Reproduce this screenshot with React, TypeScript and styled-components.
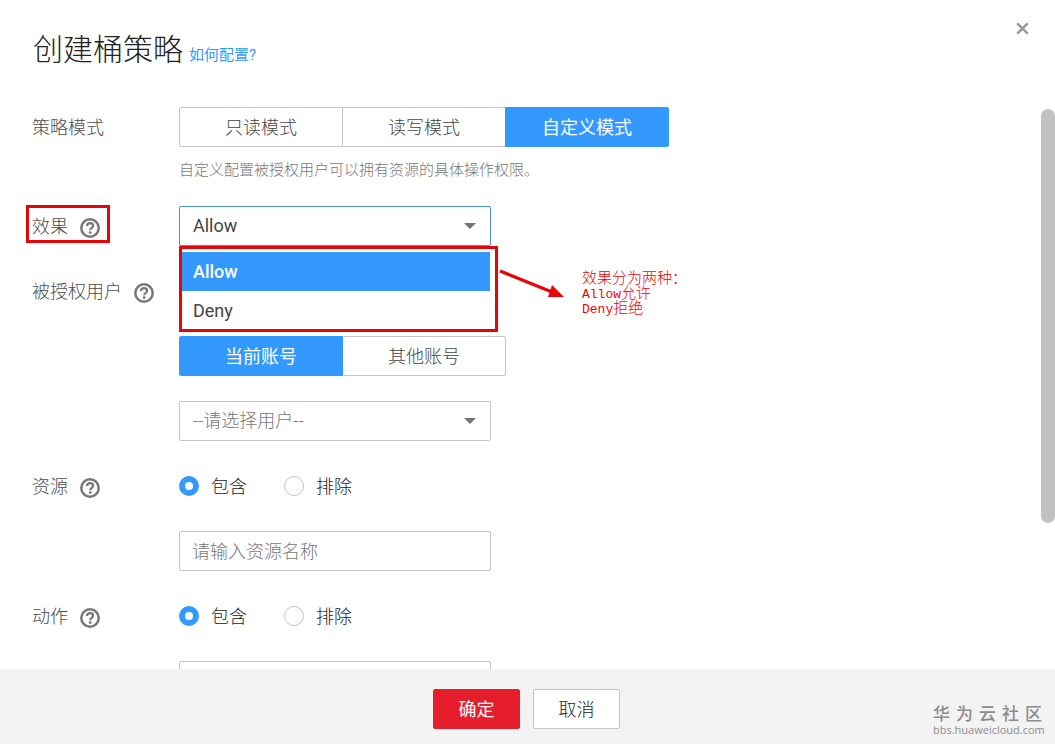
import React from 'react';
import styled, { createGlobalStyle, css } from 'styled-components';

const BLUE = '#3399ff';
const RED = '#e80508';
const BORDER = '#c4c4c4';

const GlobalStyle = createGlobalStyle`
  *, *::before, *::after { box-sizing: border-box; }
  body {
    margin: 0;
    background: #fff;
    color: #222;
    font-family: Roboto, "Noto Sans CJK SC", sans-serif;
    font-size: 18px;
    font-weight: 300;
  }
  button, input, select { font: inherit; color: inherit; margin: 0; }
`;

const Dialog = styled.section`
  display: flex;
  flex-direction: column;
  height: 100vh;
  background: #fff;
`;

const Header = styled.header`
  display: flex;
  flex: none;
  align-items: flex-start;
  justify-content: space-between;
  height: 107px;
  padding: 20px 26px 0 33px;
`;

const Heading = styled.div`
  display: flex;
  align-items: baseline;
  gap: 6px;
  padding-top: 8px;
`;

const Title = styled.h1`
  margin: 0;
  font-size: 30px;
  line-height: 44px;
  font-weight: 300;
`;

const HelpLink = styled.a`
  color: ${BLUE};
  font-size: 15px;
  font-weight: 400;
  text-decoration: none;
`;

const CloseButton = styled.button`
  display: flex;
  padding: 2px 0;
  border: 0;
  background: none;
  color: #999;
  cursor: pointer;
`;

const Body = styled.div`
  display: flex;
  flex: 1;
  min-height: 0;
`;

const Form = styled.form`
  display: flex;
  flex: 1;
  flex-direction: column;
  gap: 25px;
  padding-left: 32px;
  overflow-y: auto;
  scrollbar-width: none;
`;

const Track = styled.div`
  flex: none;
  width: 14px;
  padding-top: 2px;
`;

const Thumb = styled.div`
  height: 74%;
  border-radius: 7px;
  background: #c1c1c1;
`;

const Field = styled.div`
  display: grid;
  grid-template-columns: 147px 1fr;
  flex: none;
`;

const LabelCell = styled.div`
  position: relative;
  display: flex;
  align-items: center;
  gap: 12px;
  height: 40px;
  padding-bottom: 2px;
  color: #4c4c4c;
`;

const HelpButton = styled.button`
  display: flex;
  margin-top: 6px;
  padding: 0;
  border: 0;
  background: none;
  color: #777;
  cursor: pointer;
`;

const LabelMark = styled.div`
  position: absolute;
  top: -1px;
  left: -6px;
  width: 84px;
  height: 38px;
  border: 3px solid ${RED};
  pointer-events: none;
`;

const Controls = styled.div<{ $skipRow?: boolean }>`
  display: flex;
  flex-direction: column;
  align-items: flex-start;
  gap: 25px;
  padding-top: ${p => (p.$skipRow ? '65px' : '0')};
`;

const Hint = styled.p`
  margin: 12px 0 0;
  color: #777;
  font-size: 15px;
  line-height: 22px;
`;

const Segments = styled.div`
  display: flex;
`;

const Segment = styled.button<{ $active?: boolean }>`
  width: 164px;
  height: 40px;
  padding: 0 0 2px;
  border: 1px solid ${BORDER};
  background: #fff;
  color: #444;
  cursor: pointer;
  & + & { margin-left: -1px; }
  &:first-child { border-radius: 2px 0 0 2px; }
  &:last-child { border-radius: 0 2px 2px 0; }
  ${p => p.$active && css`
    position: relative;
    border-color: ${BLUE};
    background: ${BLUE};
    color: #fff;
    font-weight: 400;
  `}
`;

const SelectWrap = styled.div`
  position: relative;
  width: 312px;
`;

const SelectBox = styled.select<{ $open?: boolean; $empty?: boolean }>`
  display: block;
  width: 100%;
  height: 40px;
  padding: 0 13px 2px;
  border: 1px solid ${p => (p.$open ? '#4a90d9' : BORDER)};
  border-radius: 2px;
  outline: 0;
  appearance: none;
  background: #fff;
  color: ${p => (p.$empty ? '#777' : '#444')};
  font-weight: ${p => (p.$empty ? 300 : 400)};
`;

const Caret = styled.svg`
  position: absolute;
  top: 17px;
  right: 15px;
  pointer-events: none;
`;

const Menu = styled.div`
  position: absolute;
  z-index: 2;
  top: 100%;
  left: 0;
  width: 319px;
  height: 86px;
  padding: 3px 5px 0 0;
  border: 3px solid ${RED};
  background: #fff;
`;

const Option = styled.button<{ $active?: boolean }>`
  display: block;
  width: 100%;
  height: 39px;
  padding: 0 11px;
  border: 0;
  background: ${p => (p.$active ? BLUE : 'transparent')};
  color: ${p => (p.$active ? '#fff' : '#444')};
  font-weight: ${p => (p.$active ? 500 : 400)};
  text-align: left;
`;

const NoteArrow = styled.svg`
  position: absolute;
  top: 62px;
  left: 319px;
`;

const Note = styled.div`
  position: absolute;
  top: 66px;
  left: 403px;
  color: ${RED};
  font-family: "Liberation Mono", "Noto Sans CJK SC", monospace;
  font-size: 15px;
  white-space: nowrap;
`;

const NoteLine = styled.p`
  height: 15px;
  margin: 0;
  line-height: 15px;
`;

const Mono = styled.span`
  font-size: 13px;
  line-height: 13px;
`;

const RadioRow = styled.div`
  display: flex;
  gap: 37px;
  height: 40px;
`;

const RadioLabel = styled.label`
  display: flex;
  align-items: center;
  gap: 12px;
`;

const RadioText = styled.span`
  padding-bottom: 2px;
`;

const Radio = styled.input`
  width: 20px;
  height: 20px;
  border: 1px solid ${BORDER};
  border-radius: 50%;
  appearance: none;
  background: #fff;
  &:checked { border: 6px solid ${BLUE}; }
`;

const TextInput = styled.input`
  width: 312px;
  height: 40px;
  padding: 0 12px;
  border: 1px solid ${BORDER};
  border-radius: 2px;
  outline: 0;
  background: #fff;
  &::placeholder { color: #777; opacity: 1; }
`;

const Footer = styled.footer`
  position: relative;
  display: flex;
  flex: none;
  align-items: center;
  justify-content: center;
  gap: 13px;
  height: 75px;
  padding: 4px 2px 0 0;
  background: #f3f3f3;
`;

const ActionButton = styled.button<{ $primary?: boolean }>`
  width: 87px;
  height: 40px;
  padding: 0 0 2px;
  border: 1px solid ${p => (p.$primary ? '#e61e2b' : BORDER)};
  border-radius: 2px;
  background: ${p => (p.$primary ? '#e61e2b' : '#fff')};
  color: ${p => (p.$primary ? '#fff' : '#222')};
  font-weight: ${p => (p.$primary ? 400 : 300)};
`;

const Watermark = styled.div`
  position: absolute;
  right: 13px;
  bottom: 7px;
  width: 109px;
  color: #8c8c8c;
  font-weight: 500;
`;

const WatermarkName = styled.div`
  font-size: 17px;
  line-height: 18px;
  text-align-last: justify;
`;

const WatermarkSite = styled.div`
  font-family: "Open Sans", sans-serif;
  font-size: 11px;
  font-weight: 400;
  line-height: 14px;
  white-space: nowrap;
`;

function Help({ name }: { name: string }) {
  return (
    <HelpButton type="button" aria-label={`${name}说明`}>
      <svg width="20" height="20" viewBox="0 0 20 20" fill="none" stroke="currentColor">
        <circle cx="10" cy="10" r="8.7" strokeWidth="2.5" />
        <path d="M7 8.1C7 6.1 8.3 5.2 10.1 5.2C11.9 5.2 13.1 6.2 13.1 7.8C13.1 9.8 10.2 9.9 10.2 12.2" strokeWidth="2.2" />
        <circle cx="10.2" cy="14.6" r="1.4" fill="currentColor" stroke="none" />
      </svg>
    </HelpButton>
  );
}

function DownCaret() {
  return (
    <Caret width="12" height="6" viewBox="0 0 12 6">
      <path d="M0 0H12L6 6Z" fill="#737373" />
    </Caret>
  );
}

function Rule({ id, name, placeholder }: { id: string; name: string; placeholder?: string }) {
  return (
    <Field>
      <LabelCell>
        <label htmlFor={id}>{name}</label>
        <Help name={name} />
      </LabelCell>
      <Controls>
        <RadioRow role="radiogroup" aria-label={name}>
          <RadioLabel>
            <Radio type="radio" name={`${id}-match`} defaultChecked />
            <RadioText>包含</RadioText>
          </RadioLabel>
          <RadioLabel>
            <Radio type="radio" name={`${id}-match`} />
            <RadioText>排除</RadioText>
          </RadioLabel>
        </RadioRow>
        <TextInput id={id} placeholder={placeholder} />
      </Controls>
    </Field>
  );
}

export default function App() {
  return (
    <>
      <GlobalStyle />
      <Dialog role="dialog" aria-labelledby="dialog-title">
        <Header>
          <Heading>
            <Title id="dialog-title">创建桶策略</Title>
            <HelpLink href="#help">如何配置?</HelpLink>
          </Heading>
          <CloseButton type="button" aria-label="关闭">
            <svg width="13" height="13" viewBox="0 0 13 13" stroke="currentColor" strokeWidth="2.6">
              <path d="M1.3 1.3L11.7 11.7M11.7 1.3L1.3 11.7" />
            </svg>
          </CloseButton>
        </Header>
        <Body>
          <Form>
            <Field>
              <LabelCell>策略模式</LabelCell>
              <div>
                <Segments>
                  <Segment type="button">只读模式</Segment>
                  <Segment type="button">读写模式</Segment>
                  <Segment type="button" $active>自定义模式</Segment>
                </Segments>
                <Hint>自定义配置被授权用户可以拥有资源的具体操作权限。</Hint>
              </div>
            </Field>
            <Field>
              <LabelCell>
                <label htmlFor="effect">效果</label>
                <Help name="效果" />
                <LabelMark />
              </LabelCell>
              <SelectWrap>
                <SelectBox id="effect" defaultValue="Allow" $open>
                  <option>Allow</option>
                  <option>Deny</option>
                </SelectBox>
                <DownCaret />
                <Menu role="listbox" aria-label="效果">
                  <Option type="button" role="option" aria-selected="true" $active>Allow</Option>
                  <Option type="button" role="option" aria-selected="false">Deny</Option>
                </Menu>
                <NoteArrow width="68" height="34" viewBox="0 0 68 34">
                  <path d="M2 3L54 24" stroke={RED} strokeWidth="3.2" />
                  <path d="M66 29L54 17L50 29Z" fill={RED} />
                </NoteArrow>
                <Note>
                  <NoteLine>效果分为两种：</NoteLine>
                  <NoteLine><Mono>Allow</Mono>允许</NoteLine>
                  <NoteLine><Mono>Deny</Mono>拒绝</NoteLine>
                </Note>
              </SelectWrap>
            </Field>
            <Field>
              <LabelCell>
                <label htmlFor="grantee">被授权用户</label>
                <Help name="被授权用户" />
              </LabelCell>
              <Controls $skipRow>
                <Segments>
                  <Segment type="button" $active>当前账号</Segment>
                  <Segment type="button">其他账号</Segment>
                </Segments>
                <SelectWrap>
                  <SelectBox id="grantee" $empty>
                    <option>--请选择用户--</option>
                  </SelectBox>
                  <DownCaret />
                </SelectWrap>
              </Controls>
            </Field>
            <Rule id="resource" name="资源" placeholder="请输入资源名称" />
            <Rule id="action" name="动作" />
          </Form>
          <Track aria-hidden="true"><Thumb /></Track>
        </Body>
        <Footer>
          <ActionButton type="button" $primary>确定</ActionButton>
          <ActionButton type="button">取消</ActionButton>
          <Watermark>
            <WatermarkName>华 为 云 社 区</WatermarkName>
            <WatermarkSite>bbs.huaweicloud.com</WatermarkSite>
          </Watermark>
        </Footer>
      </Dialog>
    </>
  );
}
